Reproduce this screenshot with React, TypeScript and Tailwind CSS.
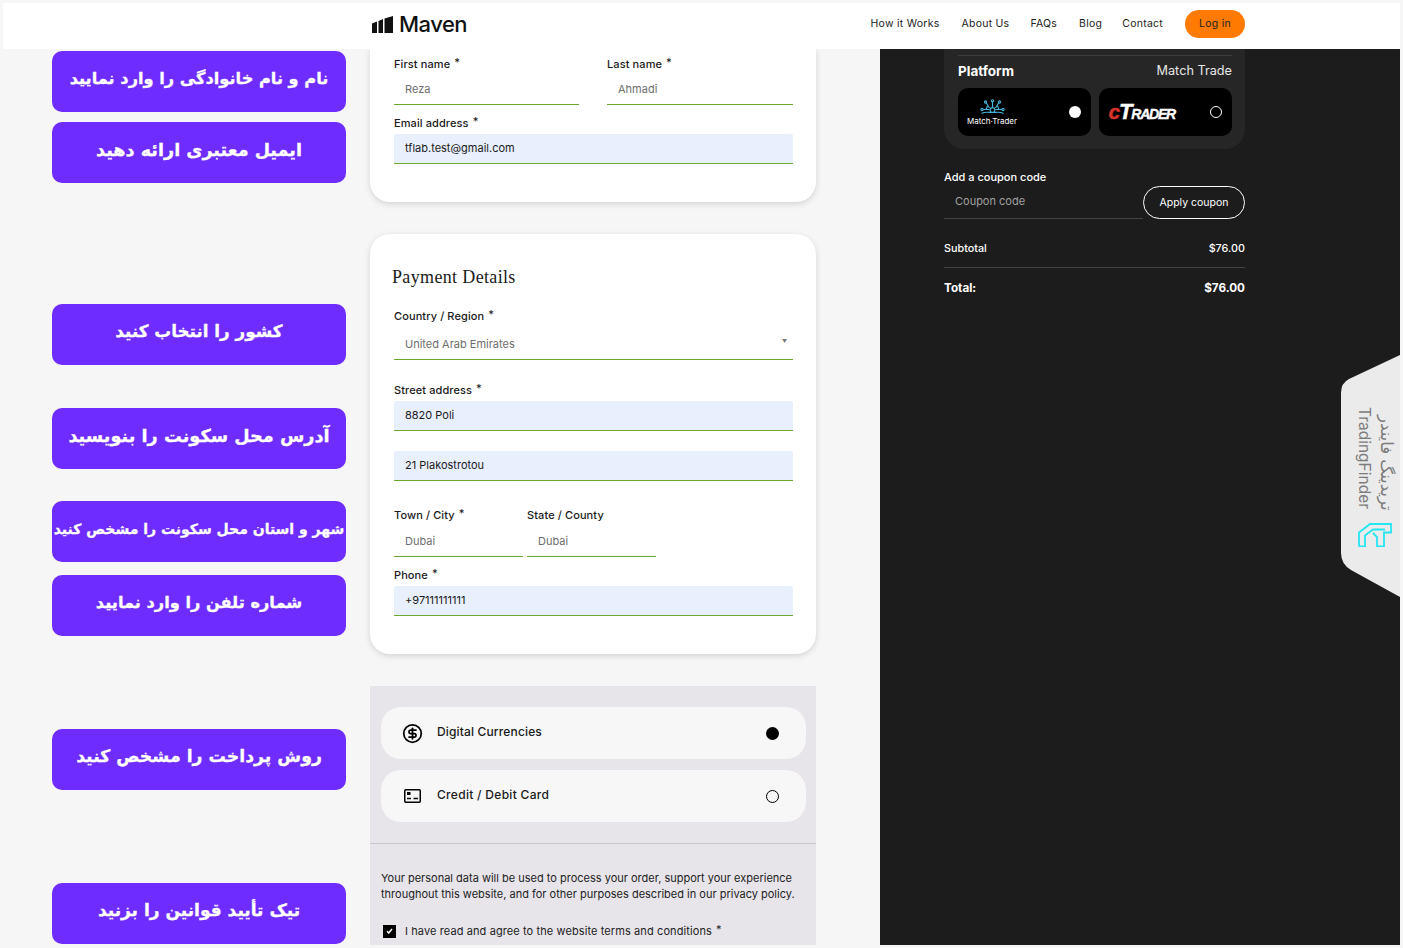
import { CircleDollarSign } from "lucide-react"

const hints = [
  { text: "نام و نام خانوادگی را وارد نمایید", cls: "mt-[2px] text-[16.2px]" },
  { text: "ایمیل معتبری ارائه دهید", cls: "mt-[10px] text-[17.6px]" },
  { text: "کشور را انتخاب کنید", cls: "mt-[121px] text-[16.8px]" },
  { text: "آدرس محل سکونت را بنویسید", cls: "mt-[43px] text-[17.7px]" },
  { text: "شهر و استان محل سکونت را مشخص کنید", cls: "mt-[32px] text-[14px]" },
  { text: "شماره تلفن را وارد نمایید", cls: "mt-[13px] text-[16.2px]" },
  { text: "روش پرداخت را مشخص کنید", cls: "mt-[93px] text-[17.3px]" },
  { text: "تیک تأیید قوانین را بزنید", cls: "mt-[93px] text-[17px]" },
]

function Label({ text, required = true }: { text: string; required?: boolean }) {
  return (
    <div className="h-[14px] text-[11px] leading-[14px] font-medium tracking-[0.1px] text-[#1a1a1a]">
      {text}
      {required && <span className="relative -top-[2px] ml-1">*</span>}
    </div>
  )
}

function Field({ value, filled = false }: { value: string; filled?: boolean }) {
  return (
    <div
      className={
        filled
          ? "mt-1 flex h-[30px] items-center rounded-t-[2px] border-b border-[#6aa82e] bg-[#e8f0fe] pl-[11px] text-[11px] text-[#1a1a1a]"
          : "mt-1 flex h-[30px] items-center border-b border-[#6aa82e] pl-[11px] text-[11px] text-[#6e6e6e]"
      }
    >
      {value}
    </div>
  )
}

function Radio({ checked, dark = false }: { checked: boolean; dark?: boolean }) {
  if (dark) {
    return (
      <span
        className={
          checked
            ? "h-3 w-3 rounded-full bg-white"
            : "h-3 w-3 rounded-full border border-white"
        }
      />
    )
  }
  return (
    <span
      className={
        checked
          ? "h-[13px] w-[13px] rounded-full bg-black"
          : "h-[13px] w-[13px] rounded-full border border-black"
      }
    />
  )
}

function MatchTraderLogo() {
  return (
    <div className="flex w-[50px] flex-col items-center">
      <svg width="25" height="16" viewBox="0 0 25 16" fill="none" stroke="#45b4d8" strokeWidth="1.1">
        <circle cx="12.5" cy="11" r="2.4" />
        <path d="M12.5 8.5V2M9.5 9 6 3.5M15.5 9 19 3.5M3 10.5h6.5M15.5 10.5H22M1.5 14.5c3-2 7-1 11-1s8-1 11 1M7.5 7 6 10.5M17.5 7 19 10.5" />
        <circle cx="12.5" cy="1.8" r="1.1" />
        <circle cx="5.5" cy="3" r="1.1" />
        <circle cx="19.5" cy="3" r="1.1" />
        <circle cx="2" cy="10.5" r="1.1" />
        <circle cx="23" cy="10.5" r="1.1" />
      </svg>
      <span className="mt-[2px] text-[8px] leading-[9px] whitespace-nowrap text-white">Match·Trader</span>
    </div>
  )
}

function CTraderLogo() {
  return (
    <div className="flex items-baseline font-['Liberation_Sans',sans-serif] italic font-bold leading-none tracking-[-1.2px]">
      <span className="text-[21px] text-[#d8342c] [-webkit-text-stroke:0.4px_#d8342c]">c</span>
      <span className="text-[22px] text-white [-webkit-text-stroke:0.4px_white]">T</span>
      <span className="text-[14px] text-white [-webkit-text-stroke:0.4px_white]">RADER</span>
    </div>
  )
}

function SideTab() {
  return (
    <div className="absolute top-[355px] right-[3px] h-[242px] w-[59px]">
      <svg className="absolute inset-0" width="59" height="242" viewBox="0 0 59 242">
        <path
          d="M59 0 V242 L10 215 Q0 209 0 198 V38 Q0 28 8 24 Z"
          fill="#ebebeb"
        />
      </svg>
      <div className="absolute top-[52px] left-[14px] h-[104px] font-['Inter',sans-serif] text-[15.5px] leading-[18px] text-[#7c7c7c] [writing-mode:vertical-rl]">
        TradingFinder
      </div>
      <div
        dir="rtl"
        className="absolute top-[52px] left-[35px] h-[104px] font-['DejaVu_Sans',sans-serif] text-[16.5px] leading-[20px] whitespace-nowrap text-[#7c7c7c] [writing-mode:vertical-rl]"
      >
        تریدینگ فایندر
      </div>
      <svg className="absolute top-[168px] left-[17px]" width="34" height="24" viewBox="0 0 34 24" fill="none" stroke="#24e6f2" strokeWidth="1.8">
        <path d="M1 23.5V9.5L12 1H33V9.5H26V23.5H19V14L15 10" />
        <path d="M1 23.5H7V12.5L15 6.5H27" />
      </svg>
    </div>
  )
}

export default function App() {
  return (
    <div className="relative h-screen overflow-hidden bg-[#f6f6f6] p-[3px] font-['Inter',sans-serif]">
      <header className="flex h-[46px] items-center justify-between bg-white pr-[155px] pb-1 pl-[369px]">
        <div className="flex items-center gap-[6px]">
          <svg width="21" height="17" viewBox="0 0 21 17" fill="#111">
            <path d="M0 7.5 5 5.5V17H0ZM6.5 5 11 3V17H6.5ZM12.5 2.5 21 0V17H12.5Z" />
          </svg>
          <span className="text-[22px] leading-none font-medium tracking-[-0.5px] text-[#111]">Maven</span>
        </div>
        <nav className="flex items-center text-[10.5px] tracking-[0.25px] text-[#222]">
          <span>How it Works</span>
          <span className="ml-[22px]">About Us</span>
          <span className="ml-[21px]">FAQs</span>
          <span className="ml-[22px]">Blog</span>
          <span className="ml-5">Contact</span>
          <span className="ml-[22px] flex h-[28px] w-[60px] items-center justify-center rounded-full bg-[#ff7a00] text-[#222]">
            Log in
          </span>
        </nav>
      </header>

      <main className="flex h-[896px] overflow-hidden">
        <aside className="flex w-[367px] shrink-0 flex-col pl-[49px]">
          {hints.map((h) => (
            <div
              key={h.text}
              dir="rtl"
              className={`flex h-[61px] w-[294px] shrink-0 items-center justify-center rounded-[10px] bg-[#6f2cff] pb-[5px] font-['DejaVu_Sans',sans-serif] font-bold whitespace-nowrap text-white [-webkit-text-stroke:0.3px_white] ${h.cls}`}
            >
              {h.text}
            </div>
          ))}
        </aside>

        <section className="flex w-[446px] shrink-0 flex-col">
          <div className="rounded-b-[20px] bg-white pt-2 pr-[23px] pb-[38px] pl-[24px] shadow-[0_2px_6px_rgba(0,0,0,0.14)]">
            <div className="flex justify-between">
              <div className="w-[185px]">
                <Label text="First name" />
                <Field value="Reza" />
              </div>
              <div className="w-[186px]">
                <Label text="Last name" />
                <Field value="Ahmadi" />
              </div>
            </div>
            <div className="mt-[11px]">
              <Label text="Email address" />
              <Field value="tflab.test@gmail.com" filled />
            </div>
          </div>

          <div className="mt-[32px] rounded-[20px] bg-white pt-[30px] pr-[23px] pb-[38px] pl-[24px] shadow-[0_2px_6px_rgba(0,0,0,0.14)]">
            <h2 className="-ml-[2px] h-[26px] font-['Liberation_Serif',serif] text-[18px] leading-[26px] tracking-[0.35px] text-[#1a1a1a]">
              Payment Details
            </h2>
            <div className="mt-[19px]">
              <Label text="Country / Region" />
              <div className="relative pt-[3px]">
                <Field value="United Arab Emirates" />
                <span className="absolute top-[16px] right-[6px] text-[5px] leading-[5px] text-[#777]">▼</span>
              </div>
            </div>
            <div className="mt-[23px]">
              <Label text="Street address" />
              <Field value="8820 Poli" filled />
            </div>
            <div className="mt-5 [&>div]:mt-0">
              <Field value="21 Plakostrotou" filled />
            </div>
            <div className="mt-[27px] flex gap-1">
              <div className="w-[129px]">
                <Label text="Town / City" />
                <div className="pt-[1px]">
                  <Field value="Dubai" />
                </div>
              </div>
              <div className="w-[129px]">
                <Label text="State / County" required={false} />
                <div className="pt-[1px]">
                  <Field value="Dubai" />
                </div>
              </div>
            </div>
            <div className="mt-[11px]">
              <Label text="Phone" />
              <Field value="+97111111111" filled />
            </div>
          </div>

          <div className="mt-[32px] flex-1 bg-[#e7e5ea]">
            <div className="flex flex-col gap-[11px] pt-[21px] pr-[10px] pb-[21px] pl-[11px]">
              <div className="flex h-[52px] items-center rounded-[20px] bg-[#f7f7f8] pr-[27px] pl-[21px]">
                <CircleDollarSign size={21} strokeWidth={2} className="text-black" />
                <span className="ml-[14px] flex-1 pb-[2px] text-[12px] font-medium tracking-[0.15px] text-[#1a1a1a]">
                  Digital Currencies
                </span>
                <Radio checked />
              </div>
              <div className="flex h-[52px] items-center rounded-[20px] bg-[#f7f7f8] pr-[27px] pl-[23px]">
                <svg width="17" height="14" viewBox="0 0 17 14" fill="none" stroke="#000" strokeWidth="1.5">
                  <rect x="0.75" y="0.75" width="15.5" height="12.5" rx="1" />
                  <rect x="3" y="3" width="3.5" height="3" fill="#000" stroke="none" />
                  <path d="M3 9.5h4M9.5 9.5H14" />
                </svg>
                <span className="ml-[16px] flex-1 pb-[2px] text-[12px] font-medium tracking-[0.3px] text-[#1a1a1a]">
                  Credit / Debit Card
                </span>
                <Radio checked={false} />
              </div>
            </div>
            <div className="border-t border-[#c8c6cc] px-[11px] pt-[26px]">
              <p className="text-[11px] leading-[16px] text-[#222]">
                Your personal data will be used to process your order, support your experience throughout this
                website, and for other purposes described in our privacy policy.
              </p>
              <div className="mt-[21px] ml-[2px] flex items-center">
                <span className="flex h-[13px] w-[13px] items-center justify-center bg-black">
                  <svg width="7" height="6" viewBox="0 0 7 6" fill="none" stroke="#fff" strokeWidth="1.5">
                    <path d="M1 3.2 2.7 5 6 1" />
                  </svg>
                </span>
                <span className="ml-[9px] text-[11px] tracking-[0.1px] text-[#222]">
                  I have read and agree to the website terms and conditions
                  <span className="relative -top-[2px] ml-1">*</span>
                </span>
              </div>
            </div>
          </div>
        </section>

        <section className="ml-[64px] flex-1 bg-[#1c1c1c] pl-[64px]">
          <div className="w-[301px]">
            <div className="rounded-b-[20px] bg-[#262626] pt-[6px] pr-[13px] pb-[13px] pl-[14px]">
              <div className="border-t border-[#3c3c3c] pt-[6px]">
                <div className="flex h-[18px] items-center justify-between">
                  <span className="text-[13.5px] font-bold text-white">Platform</span>
                  <span className="text-[12.7px] text-[#e6e6e6]">Match Trade</span>
                </div>
                <div className="mt-2 flex gap-2">
                  <div className="flex h-12 flex-1 items-center justify-between rounded-[10px] bg-black pr-[10px] pl-[9px]">
                    <MatchTraderLogo />
                    <Radio checked dark />
                  </div>
                  <div className="flex h-12 flex-1 items-center justify-between rounded-[10px] bg-black pr-[10px] pl-[10px]">
                    <CTraderLogo />
                    <Radio checked={false} dark />
                  </div>
                </div>
              </div>
            </div>

            <div className="mt-[21px] h-[14px] text-[11px] leading-[14px] font-medium text-white">
              Add a coupon code
            </div>
            <div className="mt-[2px] flex">
              <div className="h-[33px] flex-1 border-b border-[#444] pt-[8px] pl-[11px] text-[11px] leading-[14px] text-[#a0a0a0]">
                Coupon code
              </div>
              <div className="flex h-[33px] w-[102px] items-center justify-center rounded-full border border-white text-[10.5px] text-white">
                Apply coupon
              </div>
            </div>

            <div className="mt-[23px] flex h-[14px] items-center justify-between text-[10.8px] font-medium text-white">
              <span>Subtotal</span>
              <span>$76.00</span>
            </div>
            <div className="mt-[11px] border-t border-[#444]" />
            <div className="mt-[14px] flex h-[14px] items-center justify-between text-[11.7px] font-bold text-white">
              <span>Total:</span>
              <span>$76.00</span>
            </div>
          </div>
        </section>
      </main>

      <SideTab />
    </div>
  )
}
